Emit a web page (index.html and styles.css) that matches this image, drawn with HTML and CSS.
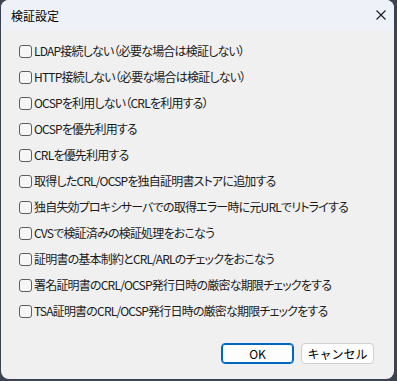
FILE: index.html
```html
<!DOCTYPE html>
<html lang="ja">
  <head>
    <meta charset="UTF-8" />
    <title>検証設定</title>
    <link rel="stylesheet" href="styles.css">
  </head>
  <body>
    <div class="window">
      <div class="titlebar">
        <span class="title">検証設定</span>
        <svg class="close" width="10" height="10" viewBox="0 0 10 10">
          <path d="M0.5 0.5L9.5 9.5M9.5 0.5L0.5 9.5" stroke="#1a1a1a" stroke-width="1.1" fill="none" />
        </svg>
      </div>
      <div class="content">
        <div class="options">
          <label class="option"><input type="checkbox" /><span>LDAP接続しない（必要な場合は検証しない）</span></label>
          <label class="option"><input type="checkbox" /><span>HTTP接続しない（必要な場合は検証しない）</span></label>
          <label class="option"><input type="checkbox" /><span>OCSPを利用しない（CRLを利用する）</span></label>
          <label class="option"><input type="checkbox" /><span>OCSPを優先利用する</span></label>
          <label class="option"><input type="checkbox" /><span>CRLを優先利用する</span></label>
          <label class="option"><input type="checkbox" /><span>取得したCRL/OCSPを独自証明書ストアに追加する</span></label>
          <label class="option"><input type="checkbox" /><span>独自失効プロキシサーバでの取得エラー時に元URLでリトライする</span></label>
          <label class="option"><input type="checkbox" /><span>CVSで検証済みの検証処理をおこなう</span></label>
          <label class="option"><input type="checkbox" /><span>証明書の基本制約とCRL/ARLのチェックをおこなう</span></label>
          <label class="option"><input type="checkbox" /><span>署名証明書のCRL/OCSP発行日時の厳密な期限チェックをする</span></label>
          <label class="option"><input type="checkbox" /><span>TSA証明書のCRL/OCSP発行日時の厳密な期限チェックをする</span></label>
        </div>
        <div class="buttons">
          <button class="btn btn-default">OK</button>
          <button class="btn">キャンセル</button>
        </div>
      </div>
    </div>
  </body>
</html>
```

FILE: styles.css
```css
html,
body {
  margin: 0;
  padding: 0;
  height: 100%;
}
body {
  background-color: #3b4350;
  font-family: 'Noto Sans CJK JP', 'Noto Sans', sans-serif;
  font-size: 12px;
  font-feature-settings: 'palt';
  color: #1a1a1a;
}
.window {
  margin-left: 1px;
  width: 393px;
  height: 379px;
  border-radius: 8px;
  overflow: hidden;
  background-color: #f0f0f0;
  display: flex;
  flex-direction: column;
}
.titlebar {
  height: 30px;
  background-color: #eef2f8;
  display: flex;
  align-items: center;
  justify-content: space-between;
  padding: 0 8px 0 10px;
  flex-shrink: 0;
}
.title {
  font-size: 12px;
  color: #000;
}
.close {
  margin-top: -1px;
}
.content {
  flex: 1;
  display: flex;
  flex-direction: column;
  justify-content: space-between;
  padding: 8px 20px 15px 18px;
}
.options {
  display: flex;
  flex-direction: column;
}
.option {
  height: 26px;
  display: flex;
  align-items: center;
  gap: 2px;
  white-space: nowrap;
}
.option input {
  appearance: none;
  -webkit-appearance: none;
  margin: 0;
  width: 13px;
  height: 13px;
  border: 1px solid #5e5e5e;
  border-radius: 3px;
  background-color: #f6f6f6;
  flex-shrink: 0;
}
.option span {
  line-height: 16px;
  letter-spacing: -0.8px;
}
.buttons {
  display: flex;
  justify-content: flex-end;
  gap: 7px;
}
.btn {
  width: 73px;
  height: 21px;
  padding: 0;
  font-family: inherit;
  font-size: 12px;
  color: #000;
  background-color: #fdfdfd;
  border: 1px solid #d0d0d0;
  border-radius: 4px;
}
.btn-default {
  border-color: #0067c0;
  box-shadow: inset 0 0 0 1px #0067c0;
}
```
